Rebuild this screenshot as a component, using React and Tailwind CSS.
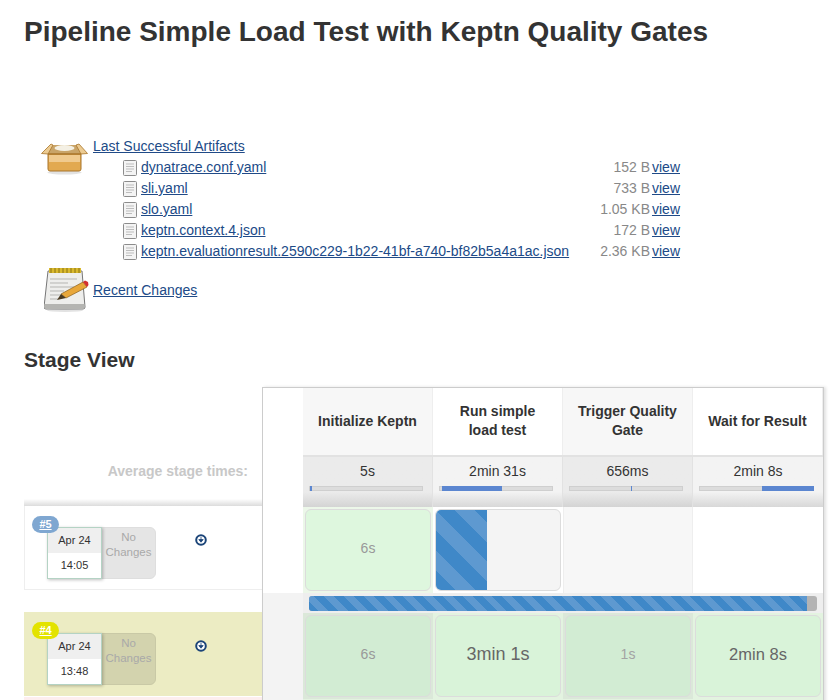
const artifacts = [
  { name: 'dynatrace.conf.yaml', size: '152 B' },
  { name: 'sli.yaml', size: '733 B' },
  { name: 'slo.yaml', size: '1.05 KB' },
  { name: 'keptn.context.4.json', size: '172 B' },
  { name: 'keptn.evaluationresult.2590c229-1b22-41bf-a740-bf82b5a4a1ac.json', size: '2.36 KB' },
];

const stages = [
  { title: ['Initialize Keptn'], time: '5s', bg: 'bg-[#f7f7f7]' },
  { title: ['Run simple', 'load test'], time: '2min 31s', bg: 'bg-white' },
  { title: ['Trigger Quality', 'Gate'], time: '656ms', bg: 'bg-[#f7f7f7]' },
  { title: ['Wait for Result'], time: '2min 8s', bg: 'bg-white' },
];

const wideStripes = 'bg-[repeating-linear-gradient(45deg,#3f88c8_0px,#3f88c8_14px,#5e99d0_14px,#5e99d0_28px)]';
const thinStripes = 'bg-[repeating-linear-gradient(45deg,#3f88c8_0px,#3f88c8_7px,#5e99d0_7px,#5e99d0_14px)]';

const BoxIcon = () => (
  <svg width="47" height="33" viewBox="0 0 47 33">
    <ellipse cx="23.5" cy="30.5" rx="17" ry="2" fill="#e2e2e2" />
    <path d="M10 3h28l2 9H7z" fill="#c9a468" />
    <ellipse cx="23.5" cy="6" rx="10" ry="3" fill="#f4f0e4" />
    <path d="M7 12h33v15a2 2 0 0 1-2 2H9a2 2 0 0 1-2-2z" fill="#e2a950" stroke="#a8752a" />
    <path d="M8 13h31v7H8z" fill="#f0ca8e" />
    <path d="M0.5 11.5 10 2l2 1-5 9z" fill="#eccb92" stroke="#a8752a" strokeWidth="0.8" />
    <path d="M46.5 11.5 38 2l-3 1 5 9z" fill="#eccb92" stroke="#a8752a" strokeWidth="0.8" />
    <path d="M7 12h33" stroke="#a8752a" />
  </svg>
);

const NotepadIcon = () => (
  <svg width="45" height="44" viewBox="0 0 45 44">
    <ellipse cx="21" cy="42.5" rx="18" ry="1.5" fill="#e2e2e2" />
    <path d="M4 3h34l3 36a2 2 0 0 1-2 2H2a2 2 0 0 1-2-2z" fill="#eeeeec" stroke="#777" />
    <path d="M0.5 36h40v3a2 2 0 0 1-2 2H2.500a2 2 0 0 1-2-2z" fill="#b5b5b2" />
    <path d="M5 0h32v5H5z" fill="#d9b92e" />
    <path d="M7 0v5M11 0v5M15 0v5M19 0v5M23 0v5M27 0v5M31 0v5M35 0v5" stroke="#8a7312" />
    <path d="M6 11h27M6 15h18M6 19h24M6 23h14M6 27h12M6 31h8" stroke="#b5b5b2" />
    <path d="M17 26 39 14l4 5-21 11z" fill="#e8a73a" stroke="#8a5f1b" strokeWidth="0.7" />
    <path d="M39 14l2-1.500 3 1.500 0.500 3-1.500 2z" fill="#d33030" />
    <path d="M13 32l4-6 5 4z" fill="#4a3a20" />
  </svg>
);

const FileIcon = () => (
  <svg width="14" height="16" viewBox="0 0 14 16" className="shrink-0">
    <rect x="0.5" y="0.5" width="13" height="15" rx="1" fill="#f4f4f4" stroke="#8c8c8c" />
    <path d="M3 4h8M3 6.5h8M3 9h8M3 11.5h6" stroke="#bdbdbd" />
  </svg>
);

const DownIcon = () => (
  <svg width="12" height="12" viewBox="0 0 12 12">
    <circle cx="6" cy="6" r="4.8" fill="#fff" stroke="#1b4478" strokeWidth="2" />
    <path d="M6 3v3.500M3.800 5.600h4.400L6 8.200z" stroke="#1b4478" fill="#1b4478" strokeWidth="0.8" />
  </svg>
);

const AvgBar = ({ left, width }) => (
  <div className="relative ml-[6px] mt-[6px] h-[5px] w-[114px] bg-[#dcdcdc] border border-[#cfcfcf]">
    <div className="absolute top-0 h-[5px] -mt-[1px] bg-[#5b86d0]" style={{ left, width }} />
  </div>
);

const BuildBadge = ({ num, color }) => (
  <div className="absolute left-[8px] top-[10px] w-[27px] h-[17px] rounded-full flex items-center justify-center text-[11px] font-bold text-white underline z-10" style={{ background: color }}>
    {num}
  </div>
);

const BuildInfo = ({ num, color, time, changes }) => (
  <div className="relative h-full w-[238px]">
    <BuildBadge num={num} color={color} />
    <div className="flex pl-[23px] pt-[21px]">
      <div className="w-[55px] h-[52px] border border-[#b4d3c4] shadow-[1px_1px_3px_rgba(0,0,0,0.25)] text-center text-[11px] text-[#333] z-[1]">
        <div className="h-[25px] leading-[25px] bg-[#efefef]">Apr 24</div>
        <div className="h-[25px] leading-[25px] bg-white">{time}</div>
      </div>
      <div className={`w-[55px] h-[52px] -ml-px rounded-r-[6px] text-center text-[11.5px] leading-[15px] pt-[2px] text-[#a9a9a9] border ${changes}`}>
        No<br />Changes
      </div>
      <div className="ml-[39px] mt-[7px]"><DownIcon /></div>
    </div>
  </div>
);

const StageCard = ({ bg, text, children }) => (
  <div className={`flex-1 m-[2px] pb-[3px] rounded-[6px] border border-[#dcdcdc] flex items-center justify-center ${bg} ${text}`}>
    {children}
  </div>
);

export default function App() {
  return (
    <div className="h-[700px] w-[838px] overflow-hidden bg-white font-['Liberation_Sans',Arial,sans-serif] text-[#333]">
      <h1 className="pl-[24px] pt-[16px] text-[28px] leading-[32px] font-bold">Pipeline Simple Load Test with Keptn Quality Gates</h1>

      {/* Artifacts */}
      <div className="flex ml-[41px] mt-[90px] text-[14px]">
        <div className="w-[52px] pt-[4px]"><BoxIcon /></div>
        <div className="w-[587px]">
          <a href="#" className="text-[#204a87] underline leading-[17px] block h-[18px]">Last Successful Artifacts</a>
          <div className="ml-[30px] mt-[1px]">
            {artifacts.map((a) => (
              <div key={a.name} className="flex items-center h-[21px] gap-[4px]">
                <FileIcon />
                <a href="#" className="text-[#204a87] underline">{a.name}</a>
                <span className="ml-auto text-[#888] mr-[-2px]">{a.size}</span>
                <a href="#" className="text-[#204a87] underline">view</a>
              </div>
            ))}
          </div>
        </div>
      </div>
      <div className="flex items-center ml-[44px] mt-[5px] text-[14px] h-[46px]">
        <div className="w-[49px]"><NotepadIcon /></div>
        <a href="#" className="text-[#204a87] underline">Recent Changes</a>
      </div>

      <h2 className="pl-[24px] mt-[35px] text-[21px] leading-[24px] font-bold">Stage View</h2>

      {/* Stage view */}
      <div className="flex ml-[24px] mt-[15px]">
        <div className="w-[238px] shrink-0">
          <div className="h-[119px] relative flex items-end pb-[24px] justify-end pr-[14px] text-[14px] font-bold text-[#c8c8c8] bg-gradient-to-b from-white from-[94%] to-[#dcdcdc]">
            Average stage times:
          </div>
          <div className="h-[84px] border-b border-[#eee] shadow-[inset_1px_0_0_#eee]">
            <BuildInfo num="#5" color="#7fa7d1" time="14:05" changes="bg-[#e5e5e5] border-[#dedede]" />
          </div>
          <div className="h-[22px]" />
          <div className="h-[84px] bg-[#ececc3]">
            <BuildInfo num="#4" color="#e3e300" time="13:48" changes="bg-[#d3d3ae] border-[#c9c9a6]" />
          </div>
          <div className="h-[1px]" />
          <div className="h-[10px] bg-[#fdeeee]" />
        </div>

        <div className="w-[562px] h-[400px] shrink-0 border border-[#ccc] border-b-0 shadow-[2px_0_3px_rgba(0,0,0,0.12)]">
          {/* header */}
          <div className="flex h-[67px]">
            <div className="w-[40px] bg-white" />
            {stages.map((s) => (
              <div key={s.time} className={`w-[130px] pb-[1px] flex flex-col items-center justify-center border-r border-[#eee] text-[14px] leading-[19px] font-bold ${s.bg}`}>
                {s.title.map((t) => <div key={t}>{t}</div>)}
              </div>
            ))}
          </div>
          {/* averages */}
          <div className="flex h-[52px]">
            <div className="w-[40px] bg-white" />
            <div className="w-[130px] border-t-2 border-[#e2e2e2] border-r pt-[5px] text-center text-[14px] leading-[18px] bg-gradient-to-b from-[#ebebeb] from-[70%] to-[#d4d4d4]">
              5s
              <AvgBar left="0px" width="2px" />
            </div>
            <div className="w-[130px] border-t-2 border-[#e2e2e2] border-r pt-[5px] text-center text-[14px] leading-[18px] bg-gradient-to-b from-[#f3f3f3] from-[70%] to-[#d8d8d8]">
              2min 31s
              <AvgBar left="2px" width="60px" />
            </div>
            <div className="w-[130px] border-t-2 border-[#e2e2e2] border-r pt-[5px] text-center text-[14px] leading-[18px] bg-gradient-to-b from-[#ebebeb] from-[70%] to-[#d4d4d4]">
              656ms
              <AvgBar left="61px" width="1px" />
            </div>
            <div className="w-[130px] border-t-2 border-[#e2e2e2] pt-[5px] text-center text-[14px] leading-[18px] bg-gradient-to-b from-[#f3f3f3] from-[70%] to-[#d8d8d8]">
              2min 8s
              <AvgBar left="62px" width="52px" />
            </div>
          </div>
          {/* build 5 */}
          <div className="flex h-[86px]">
            <div className="w-[40px] bg-white" />
            <div className="w-[130px] flex bg-[#ecf7e9]">
              <StageCard bg="bg-[#def7de]" text="text-[#999] text-[14px]">6s</StageCard>
            </div>
            <div className="w-[130px] flex bg-white">
              <div className="flex-1 m-[2px] rounded-[6px] border border-[#dcdcdc] bg-[#f4f4f4] overflow-hidden">
                <div className={`h-full w-[51px] ${wideStripes}`} />
              </div>
            </div>
            <div className="w-[130px] bg-[#f7f7f7] border-x border-[#eee]" />
            <div className="w-[130px] bg-white" />
          </div>
          {/* progress */}
          <div className="flex h-[20px] bg-[#f3f3f3]">
            <div className="w-[40px]" />
            <div className="w-[520px] bg-[#eeeeee] pt-[3px] pl-[6px] pr-[6px]">
              <div className="h-[15px] rounded-[3px] bg-[#b3b3b3] overflow-hidden">
                <div className={`h-full w-[498px] ${thinStripes}`} />
              </div>
            </div>
          </div>
          {/* build 4 */}
          <div className="flex h-[86px]">
            <div className="w-[40px] bg-[#f3f3f3]" />
            <div className="w-[130px] flex bg-[#dbe8d9]">
              <StageCard bg="bg-[#d2ecd3]" text="text-[#999] text-[14px]">6s</StageCard>
            </div>
            <div className="w-[130px] flex bg-[#e3f3e0]">
              <StageCard bg="bg-[#d9f3d9]" text="text-[#666] text-[18px]">3min 1s</StageCard>
            </div>
            <div className="w-[130px] flex bg-[#dbe8d9]">
              <StageCard bg="bg-[#d2ecd3]" text="text-[#a3a3a3] text-[14px]">1s</StageCard>
            </div>
            <div className="w-[130px] flex bg-[#e3f3e0]">
              <StageCard bg="bg-[#d9f3d9]" text="text-[#666] text-[16.5px]">2min 8s</StageCard>
            </div>
          </div>
          <div className="flex h-[10px]">
            <div className="w-[40px] bg-[#f3f3f3]" />
            <div className="w-[520px] bg-[#e3f3e0]" />
          </div>
        </div>
      </div>
    </div>
  );
}
